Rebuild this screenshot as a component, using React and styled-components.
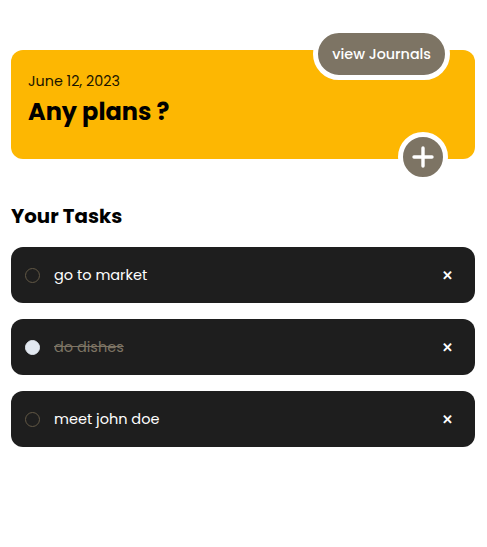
import React, { useState } from "react";
import styled, { createGlobalStyle } from "styled-components";

const GlobalStyle = createGlobalStyle`
  * { box-sizing: border-box; }
  body {
    margin: 0;
    background: #fff;
    font-family: "Poppins", "Open Sans", "Noto Sans", sans-serif;
  }
`;

const tasks = [
  { id: 1, title: "go to market", done: false },
  { id: 2, title: "do dishes", done: true },
  { id: 3, title: "meet john doe", done: false },
];

export default function App() {
  const [list, setList] = useState(tasks);

  const toggle = (id) =>
    setList(list.map((t) => (t.id === id ? { ...t, done: !t.done } : t)));
  const remove = (id) => setList(list.filter((t) => t.id !== id));

  return (
    <Page>
      <GlobalStyle />
      <Banner>
        <JournalButton>view Journals</JournalButton>
        <DateText>June 12, 2023</DateText>
        <Title>Any plans ?</Title>
        <AddButton aria-label="add task">
          <svg width="22" height="22" viewBox="0 0 22 22">
            <path d="M11 2v18M2 11h18" stroke="#fff" strokeWidth="3.4" strokeLinecap="round" />
          </svg>
        </AddButton>
      </Banner>

      <SectionTitle>Your Tasks</SectionTitle>
      <TaskList>
        {list.map((t) => (
          <TaskRow key={t.id}>
            <Check $done={t.done} onClick={() => toggle(t.id)} />
            <TaskText $done={t.done}>{t.title}</TaskText>
            <Remove onClick={() => remove(t.id)}>✕</Remove>
          </TaskRow>
        ))}
      </TaskList>
    </Page>
  );
}

const Page = styled.main`
  padding: 50px 12px 40px 11px;
`;

const Banner = styled.section`
  position: relative;
  height: 109px;
  background: #fdb702;
  border-radius: 12px;
  padding: 21px 17px;
`;

const JournalButton = styled.button`
  position: absolute;
  top: -22px;
  right: 25px;
  height: 52px;
  padding: 0 14px;
  border: 5px solid #fff;
  border-radius: 26px;
  background: #7d7464;
  color: #fff;
  font-family: inherit;
  font-size: 14.3px;
  font-weight: 500;
  cursor: pointer;
`;

const DateText = styled.p`
  margin: 0;
  font-size: 14.3px;
  line-height: 20px;
  color: #1a1400;
`;

const Title = styled.h1`
  margin: 5px 0 0;
  font-size: 24px;
  line-height: 32px;
  font-weight: 700;
  color: #000;
`;

const AddButton = styled.button`
  position: absolute;
  right: 27px;
  bottom: -23px;
  width: 50px;
  height: 50px;
  border: 5px solid #fff;
  border-radius: 50%;
  background: #7d7464;
  display: flex;
  align-items: center;
  justify-content: center;
  padding: 0;
  cursor: pointer;
`;

const SectionTitle = styled.h2`
  margin: 43px 0 16px;
  font-size: 19.8px;
  line-height: 29px;
  font-weight: 700;
  color: #000;
`;

const TaskList = styled.ul`
  list-style: none;
  margin: 0;
  padding: 0;
  display: flex;
  flex-direction: column;
  gap: 16px;
`;

const TaskRow = styled.li`
  display: flex;
  align-items: center;
  height: 56px;
  padding: 0 22px 0 14px;
  background: #1e1e1e;
  border-radius: 12px;
`;

const Check = styled.span`
  width: 15px;
  height: 15px;
  border-radius: 50%;
  flex-shrink: 0;
  border: 1px solid ${(p) => (p.$done ? "#e2e8f0" : "#625845")};
  background: ${(p) => (p.$done ? "#e2e8f0" : "transparent")};
  cursor: pointer;
`;

const TaskText = styled.span`
  flex: 1;
  margin-left: 14px;
  font-size: 14.5px;
  color: ${(p) => (p.$done ? "#7d7464" : "#fff")};
  text-decoration: ${(p) => (p.$done ? "line-through" : "none")};
`;

const Remove = styled.button`
  border: none;
  background: none;
  padding: 0;
  color: #fff;
  font-size: 13px;
  font-weight: 700;
  cursor: pointer;
`;
